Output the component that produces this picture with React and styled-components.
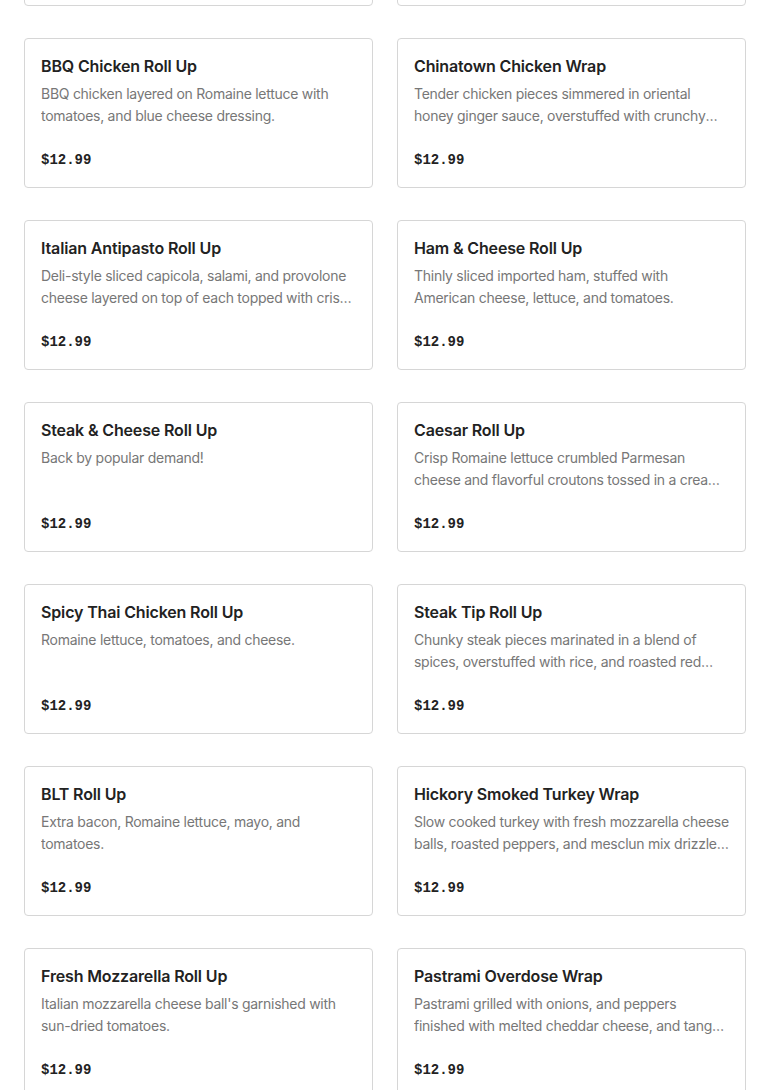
import React from 'react'
import styled, { createGlobalStyle } from 'styled-components'

const GlobalStyle = createGlobalStyle`
  html, body {
    margin: 0;
    padding: 0;
    background: #fff;
    overflow: hidden;
  }
  body {
    font-family: Inter, "Noto Sans", sans-serif;
  }
`

const Grid = styled.div`
  display: grid;
  grid-template-columns: 1fr 1fr;
  column-gap: 24px;
  row-gap: 32px;
  padding: 0 24px;
  margin-top: -144px;
`

const Card = styled.div`
  box-sizing: border-box;
  border: 1px solid #d6d6d6;
  border-radius: 4px;
  padding: 15px 16px 15px;
  display: flex;
  flex-direction: column;
`

const Title = styled.h3`
  margin: 0;
  font-size: 16px;
  line-height: 24px;
  font-weight: 600;
  letter-spacing: -0.15px;
  color: #222;
`

const Desc = styled.p`
  margin: 5px 0 0;
  flex-shrink: 0;
  font-size: 14px;
  letter-spacing: -0.27px;
  line-height: 22px;
  height: 44px;
  color: #777;
  display: -webkit-box;
  -webkit-line-clamp: 2;
  -webkit-box-orient: vertical;
  overflow: hidden;
`

const Price = styled.div`
  margin-top: 21px;
  font-family: "Liberation Mono", "DejaVu Sans Mono", monospace;
  font-weight: 700;
  font-size: 14px;
  line-height: 24px;
  color: #222;
`

const items = [
  { name: 'Turkey Club Roll Up', desc: 'Sliced turkey, bacon, lettuce, and tomatoes.' },
  { name: 'Grilled Chicken Wrap', desc: 'Grilled chicken with lettuce and tomatoes.' },
  { name: 'BBQ Chicken Roll Up', desc: 'BBQ chicken layered on Romaine lettuce with tomatoes, and blue cheese dressing.' },
  { name: 'Chinatown Chicken Wrap', desc: 'Tender chicken pieces simmered in oriental honey ginger sauce, overstuffed with crunchy bean sprouts and rice.' },
  { name: 'Italian Antipasto Roll Up', desc: 'Deli-style sliced capicola, salami, and provolone cheese layered on top of each topped with crisp lettuce.' },
  { name: 'Ham & Cheese Roll Up', desc: 'Thinly sliced imported ham, stuffed with American cheese, lettuce, and tomatoes.' },
  { name: 'Steak & Cheese Roll Up', desc: 'Back by popular demand!' },
  { name: 'Caesar Roll Up', desc: 'Crisp Romaine lettuce crumbled Parmesan cheese and flavorful croutons tossed in a creamy Caesar dressing.' },
  { name: 'Spicy Thai Chicken Roll Up', desc: 'Romaine lettuce, tomatoes, and cheese.' },
  { name: 'Steak Tip Roll Up', desc: 'Chunky steak pieces marinated in a blend of spices, overstuffed with rice, and roasted red peppers.' },
  { name: 'BLT Roll Up', desc: 'Extra bacon, Romaine lettuce, mayo, and tomatoes.' },
  { name: 'Hickory Smoked Turkey Wrap', desc: 'Slow cooked turkey with fresh mozzarella cheese balls, roasted peppers, and mesclun mix drizzled with balsamic.' },
  { name: 'Fresh Mozzarella Roll Up', desc: "Italian mozzarella cheese ball's garnished with sun-dried tomatoes." },
  { name: 'Pastrami Overdose Wrap', desc: 'Pastrami grilled with onions, and peppers finished with melted cheddar cheese, and tangy mustard.' },
]

export default function App() {
  return (
    <>
      <GlobalStyle />
      <Grid>
        {items.map(item => (
          <Card key={item.name}>
            <Title>{item.name}</Title>
            <Desc>{item.desc}</Desc>
            <Price>$12.99</Price>
          </Card>
        ))}
      </Grid>
    </>
  )
}
